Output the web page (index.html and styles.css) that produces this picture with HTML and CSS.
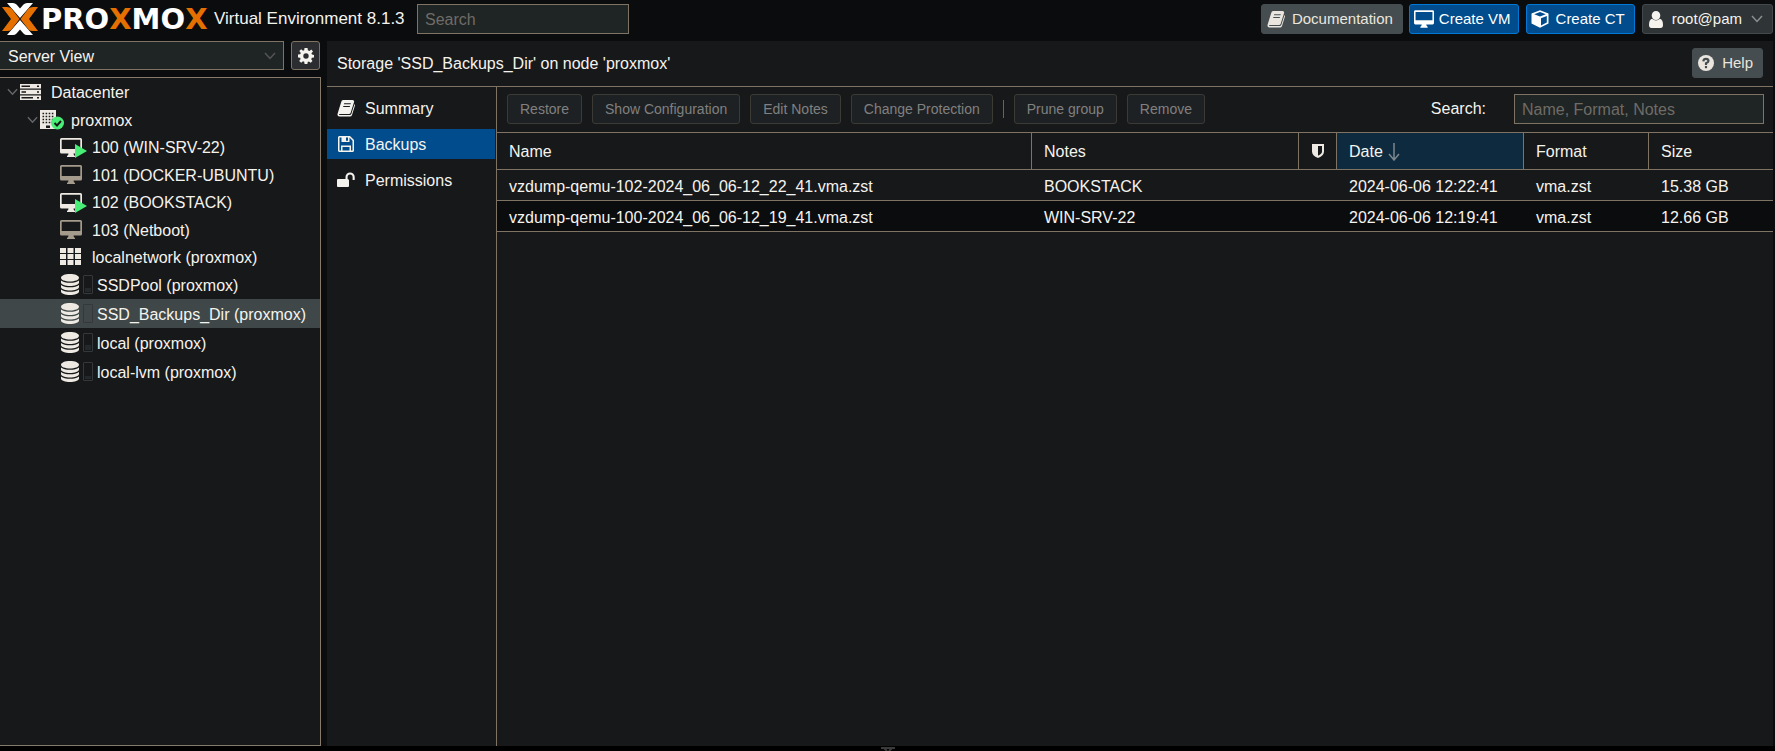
FILE: index.html
```
<!DOCTYPE html>
<html lang="en">
<head>
<meta charset="utf-8">
<title>proxmox - Proxmox Virtual Environment</title>
<link rel="stylesheet" href="styles.css">
</head>
<body>
<svg class="defs" aria-hidden="true">
  <symbol id="book" viewBox="0 0 18 18"><path fill="currentColor" fill-rule="evenodd" d="M6.2 1H15.6Q17.6 1.2 17 3.2L13.6 14Q13.1 15 12 15H3Q1.8 15 2 16H12.6Q14 16 14.4 14.8L17.5 5Q18.2 5.800 17.800 7L15 16Q14.400 17.600 13 17.600H2.400Q.2 17.300.5 15L4.200 3Q4.600 1.200 6.200 1ZM7.200 4.200 6.900 5.300H13.500L13.900 4.200ZM6.400 7 6.100 8.100H12.700L13.100 7Z"/></symbol>
  <symbol id="monitor" viewBox="0 0 22 19"><path fill="currentColor" fill-rule="evenodd" d="M1.500 0H20.500Q22 0 22 1.500V14Q22 15.500 20.500 15.500H13.500Q13.500 17 15 18V19H7V18Q8.500 17 8.500 15.500H1.500Q0 15.500 0 14V1.500Q0 0 1.500 0ZM1.700 1.700V11H20.300V1.700Z"/></symbol>
  <symbol id="cube" viewBox="0 0 18 18"><path fill="currentColor" fill-rule="evenodd" d="M9 .3 17.500 3.500V13.500L9 17.800.5 13.500V3.500ZM9 2 3.200 4.300 9 6.500 14.800 4.300ZM10 8.200V15.400L15.800 12.500V6Z"/></symbol>
  <symbol id="user" viewBox="0 0 14 17"><path fill="currentColor" d="M7 0A4.200 4.400 0 0 1 7 9 4.200 4.400 0 0 1 7 0ZM3 7.800Q7 11.200 11 7.800 14 8.500 14 14 14 17 11.500 17H2.500Q0 17 0 14 0 8.500 3 7.800Z"/></symbol>
  <symbol id="chevron" viewBox="0 0 12 8"><path fill="none" stroke="currentColor" stroke-width="1.500" d="M1 1 6 6.500 11 1"/></symbol>
  <symbol id="gear" viewBox="0 0 16 16"><path fill="currentColor" fill-rule="evenodd" d="M6.500 0H9.500L9.900 2.200 11.400 2.900 13.300 1.600 15 3.500 13.400 5.300 14 6.600 16 7V9.500L13.900 9.800 13.200 11.200 14.500 13 12.700 14.800 10.900 13.400 9.700 13.900 9.400 16H6.600L6.200 13.800 5 13.300 3.200 14.700 1.200 12.900 2.600 11.100 2.100 9.800 0 9.400V6.600L2.200 6.200 2.800 4.900 1.300 3.100 3.200 1.300 5 2.700 6.200 2.200ZM8 5.300A2.700 2.700 0 0 0 8 10.700 2.700 2.700 0 0 0 8 5.300Z"/></symbol>
  <symbol id="server" viewBox="0 0 21 16"><path fill="currentColor" fill-rule="evenodd" d="M0 0H21V4.500H0ZM1.500 1.500V3H10V1.500ZM17 1.500V3H19V1.500ZM0 5.700H21V10.200H0ZM1.500 7.200V8.700H6V7.200ZM17 7.200V8.700H19V7.200ZM0 11.500H21V16H0ZM1.500 13V14.500H13V13ZM17 13V14.500H19V13Z"/></symbol>
  <symbol id="building" viewBox="0 0 24 20"><path fill="#eeeae3" d="M0 0H16V19H0Z"/><path stroke="#17181a" stroke-width="1.600" stroke-dasharray="1.600 1.500" d="M2.500 3.500H14M2.500 6.500H14M2.500 9.500H14M2.500 12.500H14"/><path fill="#17181a" d="M6 15.500H10V18H6Z"/><circle cx="17.500" cy="13" r="6.500" fill="#48ee76"/><path d="M14.500 13 17 15.500 21 11" fill="none" stroke="#17181a" stroke-width="2"/></symbol>
  <symbol id="grid" viewBox="0 0 21 17"><path fill="currentColor" d="M0 0H6V5H0ZM7.500 0H13.500V5H7.500ZM15 0H21V5H15ZM0 6H6V11H0ZM7.500 6H13.500V11H7.500ZM15 6H21V11H15ZM0 12H6V17H0ZM7.500 12H13.500V17H7.500ZM15 12H21V17H15Z"/></symbol>
  <symbol id="database" viewBox="0 0 18 21"><path fill="currentColor" d="M9 0C14 0 18 1.600 18 3.800S14 7.500 9 7.500 0 6 0 3.800 4 0 9 0ZM0 6.400Q3 8.700 9 8.700T18 6.400V8.500C18 13.100 0 13.100 0 8.500ZM0 10.900Q3 13.200 9 13.200T18 10.900V13C18 17.600 0 17.600 0 13ZM0 15.400Q3 17.700 9 17.700T18 15.400V17.500C18 22.100 0 22.100 0 17.500Z"/></symbol>
  <symbol id="floppy" viewBox="0 0 16 16"><path fill="currentColor" fill-rule="evenodd" d="M1 0H12L16 4V15L15 16H1L0 15V1ZM1.500 1.500V14.500H3V9.500H13V14.500H14.500V4.700L11.500 1.500V6H3.500V1.500ZM8 1.500V4.700H10V1.500ZM4.500 11V14.500H11.500V11Z"/></symbol>
  <symbol id="unlock" viewBox="0 0 18 15"><path fill="currentColor" d="M1 6.500H8.500V4.500A4.600 4.500 0 0 1 17.700 4.500V7.500H15.600V4.500A2.500 2.500 0 0 0 10.600 4.500V6.500Q12 6.500 12 8V13.500Q12 14.500 11 14.500H1Q0 14.500 0 13.500V7.500Q0 6.500 1 6.500Z"/></symbol>
  <symbol id="shield" viewBox="0 0 12 14"><path fill="currentColor" fill-rule="evenodd" d="M0 0H12V7.500Q12 11.500 6 14 0 11.500 0 7.500ZM6 2V11.800Q10 9.800 10 7.500V2Z"/></symbol>
  <symbol id="help" viewBox="0 0 16 16"><circle cx="8" cy="8" r="8" fill="currentColor"/><path fill="none" stroke="#454d50" stroke-width="2.200" d="M5.300 6.300Q5.600 3.900 8 3.900T10.500 6.100Q10.500 7.300 8 8.300V10"/><path fill="#454d50" d="M6.900 11H9.100V13.200H6.900Z"/></symbol>
</svg>

<header class="topbar">
  <div class="brand">
    <svg class="mark" viewBox="0 0 36 32" aria-hidden="true">
      <path fill="#fff" d="M5 0H11Q13 0 14.500 1.500L18 5.500 21.500 1.500Q23 0 25 0H31L18 15ZM5 32H11Q13 32 14.500 30.500L18 26.500 21.500 30.500Q23 32 25 32H31L18 17Z"/>
      <path fill="#e57000" d="M0 4H5Q8 4 9.500 5.500L17.500 16 9.500 26.500Q8 28 5 28H0L9 16ZM36 4H31Q28 4 26.500 5.500L18.500 16 26.500 26.500Q28 28 31 28H36L27 16Z"/>
    </svg>
    <span class="wordmark">PRO<b>X</b>MO<b>X</b></span>
    <span class="version">Virtual Environment 8.1.3</span>
  </div>
  <input class="field global-search" type="text" placeholder="Search" aria-label="Search">
  <div class="actions">
    <button class="btn btn-grey"><svg class="i18"><use href="#book"/></svg>Documentation</button>
    <button class="btn btn-blue btn-vm"><svg class="i-mon"><use href="#monitor"/></svg>Create VM</button>
    <button class="btn btn-blue btn-ct"><svg class="i18"><use href="#cube"/></svg>Create CT</button>
    <button class="btn btn-user"><svg class="i-user"><use href="#user"/></svg>root@pam<svg class="i-chev"><use href="#chevron"/></svg></button>
  </div>
</header>

<div class="workspace">
  <aside class="sidebar">
    <div class="view-row">
      <div class="view-select">
        <select aria-label="View"><option>Server View</option></select>
        <svg class="i-chev"><use href="#chevron"/></svg>
      </div>
      <button class="gear" aria-label="Settings"><svg class="i16"><use href="#gear"/></svg></button>
    </div>
    <ul class="tree">
      <li class="l0"><svg class="i-exp"><use href="#chevron"/></svg><svg class="i-server"><use href="#server"/></svg><span class="name">Datacenter</span></li>
      <li class="l1"><svg class="i-exp"><use href="#chevron"/></svg><svg class="i-node"><use href="#building"/></svg><span class="name">proxmox</span></li>
      <li class="l2"><span class="vm run"><svg class="i-vm"><use href="#monitor"/></svg></span><span class="name">100 (WIN-SRV-22)</span></li>
      <li class="l2"><span class="vm off"><svg class="i-vm"><use href="#monitor"/></svg></span><span class="name">101 (DOCKER-UBUNTU)</span></li>
      <li class="l2"><span class="vm run"><svg class="i-vm"><use href="#monitor"/></svg></span><span class="name">102 (BOOKSTACK)</span></li>
      <li class="l2"><span class="vm off"><svg class="i-vm"><use href="#monitor"/></svg></span><span class="name">103 (Netboot)</span></li>
      <li class="l2 net"><span class="vm"><svg class="i-grid"><use href="#grid"/></svg></span><span class="name">localnetwork (proxmox)</span></li>
      <li class="l2 store"><svg class="i-db"><use href="#database"/></svg><span class="usage"><i style="height:4px"></i></span><span class="name">SSDPool (proxmox)</span></li>
      <li class="l2 store selected"><svg class="i-db"><use href="#database"/></svg><span class="usage"></span><span class="name">SSD_Backups_Dir (proxmox)</span></li>
      <li class="l2 store"><svg class="i-db"><use href="#database"/></svg><span class="usage"><i style="height:5px"></i></span><span class="name">local (proxmox)</span></li>
      <li class="l2 store"><svg class="i-db"><use href="#database"/></svg><span class="usage"><i style="height:3px"></i></span><span class="name">local-lvm (proxmox)</span></li>
    </ul>
  </aside>

  <main class="panel">
    <div class="panel-title">
      <span class="name">Storage 'SSD_Backups_Dir' on node 'proxmox'</span>
      <button class="btn btn-grey btn-help"><svg class="i16"><use href="#help"/></svg>Help</button>
    </div>
    <div class="panel-body">
      <nav class="tabs">
        <a href="#summary"><svg class="i18"><use href="#book"/></svg><span class="name">Summary</span></a>
        <a href="#backups" class="active"><svg class="i-tab"><use href="#floppy"/></svg><span class="name">Backups</span></a>
        <a href="#permissions"><svg class="i-tab"><use href="#unlock"/></svg><span class="name">Permissions</span></a>
      </nav>
      <section class="content">
        <div class="toolbar">
          <button class="tool" disabled>Restore</button>
          <button class="tool" disabled>Show Configuration</button>
          <button class="tool" disabled>Edit Notes</button>
          <button class="tool" disabled>Change Protection</button>
          <span class="sep"></span>
          <button class="tool" disabled>Prune group</button>
          <button class="tool" disabled>Remove</button>
          <label for="filter">Search:</label>
          <input class="field filter" id="filter" type="text" placeholder="Name, Format, Notes">
        </div>
        <table>
          <colgroup><col><col class="c-notes"><col class="c-shield"><col class="c-date"><col class="c-format"><col class="c-size"></colgroup>
          <thead>
            <tr><th>Name</th><th>Notes</th><th class="shield"><svg class="i-shield" role="img" aria-label="Protected"><use href="#shield"/></svg></th>
            <th class="sorted">Date<svg class="i-sort" viewBox="0 0 12 18"><path fill="none" stroke="currentColor" stroke-width="1.500" d="M6 0V17M1 11 6 17 11 11"/></svg></th><th>Format</th><th>Size</th></tr>
          </thead>
          <tbody>
            <tr><td>vzdump-qemu-102-2024_06_06-12_22_41.vma.zst</td><td>BOOKSTACK</td><td></td><td>2024-06-06 12:22:41</td><td>vma.zst</td><td>15.38 GB</td></tr>
            <tr><td>vzdump-qemu-100-2024_06_06-12_19_41.vma.zst</td><td>WIN-SRV-22</td><td></td><td>2024-06-06 12:19:41</td><td>vma.zst</td><td>12.66 GB</td></tr>
          </tbody>
        </table>
      </section>
    </div>
  </main>
</div>
<footer class="splitter"><svg class="i-split" viewBox="0 0 14 4"><path fill="none" stroke="#3a3a3a" stroke-width="2" d="M0 1H14M3 1 6 4M11 1 8 4"/></svg></footer>
</body>
</html>
```
FILE: styles.css
```
* { box-sizing: border-box; }
body {
  margin: 0;
  height: 100vh;
  display: flex;
  flex-direction: column;
  overflow: hidden;
  background: #0b0c0e;
  color: #f5f3ee;
  font: 16px/20px "Liberation Sans", Arial, sans-serif;
}
button, input, select { font: inherit; color: inherit; margin: 0; }
svg { flex: none; display: block; }
.defs { position: absolute; width: 0; height: 0; }

.i16 { width: 16px; height: 16px; }
.i18 { width: 18px; height: 18px; }
.i-mon { width: 20px; height: 18px; }
.i-user { width: 14px; height: 17px; }
.i-chev { width: 12px; height: 8px; color: #8c8f90; }
.name { padding-top: 2px; }

.topbar { display: flex; align-items: center; height: 41px; padding: 0 2px 3px; }
.brand { display: flex; align-items: center; white-space: nowrap; width: 415px; }
.mark { width: 36px; height: 32px; margin-right: 3px; }
.wordmark { font: bold 29px/32px "DejaVu Sans", sans-serif; color: #fff; width: 173px; }
.wordmark b { color: #e57000; }
.version { font-size: 17px; }
.field {
  height: 30px;
  padding: 2px 7px 0;
  border: 1px solid #7f7363;
  border-radius: 0;
  background: #1f2424;
  outline: 0;
}
.field::placeholder { color: #6f6c67; opacity: 1; }
.global-search { width: 212px; }
.actions { display: flex; margin-left: auto; }
.btn {
  display: flex;
  align-items: center;
  height: 30px;
  padding: 0 9px 0 5px;
  border: 1px solid #4d5558;
  border-radius: 3px;
  gap: 7px;
  font-size: 15px;
  white-space: nowrap;
}
.btn-grey { background: #454d50; border-color: #454d50; color: #eae6df; margin-right: 6px; }
.btn-blue { background: #004c8c; border-color: #0078d6; color: #fff; margin-right: 7px; }
.btn-vm { padding: 0 7px 0 4px; gap: 5px; }
.btn-ct { padding-left: 4px; gap: 7px; }
.btn-user { background: #2f3436; border-color: #43494b; padding-left: 6px; gap: 9px; }

.workspace { flex: 1; display: flex; min-height: 0; }
.sidebar { width: 321px; margin-right: 6px; display: flex; flex-direction: column; }
.view-row { display: flex; justify-content: space-between; padding-right: 1px; margin-bottom: 7px; }
.view-select { display: grid; width: 284px; align-items: center; }
.view-select select, .view-select svg { grid-area: 1 / 1; }
.view-select svg { justify-self: end; margin-right: 8px; color: #555; pointer-events: none; }
.view-select select {
  appearance: none;
  height: 29px;
  padding: 2px 8px 0;
  border: 1px solid #7f7363;
  border-left: 0;
  border-radius: 0;
  background: #1f2424;
}
.gear {
  display: grid;
  place-items: center;
  width: 29px;
  height: 29px;
  padding: 0;
  border: 1px solid #7f7363;
  border-radius: 3px;
  background: #2b2d30;
}
.tree {
  flex: 1;
  margin: 0;
  padding: 0;
  list-style: none;
  background: #17181a;
  border: 1px solid #857a6b;
  border-left: 0;
}
.tree li { display: flex; align-items: center; height: 28px; white-space: nowrap; }
.tree li:nth-child(even), .tree .net { height: 27px; }
.tree .store, .tree .store:nth-child(even) { height: 29px; }
.l0 { padding-left: 7px; }
.l1 { padding-left: 27px; }
.l2 { padding-left: 60px; }
.selected { background: #3f4748; }
.i-exp { width: 11px; height: 8px; margin-right: 2px; color: #65686a; }
.i-server { width: 21px; height: 16px; margin-right: 10px; color: #eeeae3; }
.i-node { width: 24px; height: 20px; margin-right: 7px; }
.vm { position: relative; width: 32px; color: #eeeae3; }
.vm.off { color: #a59b8c; }
.vm.run::after {
  content: "";
  position: absolute;
  left: 15px;
  top: 6px;
  border-left: 12px solid #48ee76;
  border-top: 7px solid transparent;
  border-bottom: 7px solid transparent;
}
.i-vm { width: 22px; height: 19px; }
.i-grid { width: 21px; height: 17px; }
.i-db { width: 18px; height: 21px; margin: 0 4px 0 1px; color: #eeeae3; }
.usage {
  display: flex;
  align-items: flex-end;
  width: 10px;
  height: 19px;
  margin-right: 4px;
  padding: 1px;
  border: 1px solid #34383a;
  border-radius: 1px;
}
.usage i { width: 100%; background: #24282a; }

.panel { flex: 1; display: flex; flex-direction: column; margin-right: 2px; min-width: 0; background: #17181a; }
.panel-title {
  display: flex;
  align-items: center;
  justify-content: space-between;
  height: 46px;
  padding: 0 10px 1px;
  border-bottom: 1px solid #7f7363;
}
.btn-help { margin-right: 0; gap: 8px; }
.panel-body { flex: 1; display: flex; }
.tabs {
  width: 170px;
  display: flex;
  flex-direction: column;
  gap: 6px;
  padding: 6px 1px 0 0;
  border-right: 1px solid #7f7363;
}
.tabs a {
  display: flex;
  align-items: center;
  gap: 10px;
  height: 30px;
  padding-left: 10px;
  color: inherit;
  text-decoration: none;
}
.tabs .active { background: #004c8c; }
.i-tab { width: 18px; height: 16px; }
.content { flex: 1; min-width: 0; }
.toolbar {
  display: flex;
  align-items: center;
  gap: 10px;
  height: 45px;
  padding: 0 9px 1px 10px;
}
.tool {
  height: 30px;
  padding: 0 12px;
  border: 1px solid #3b3a35;
  border-radius: 3px;
  background: #1e2123;
  color: #808080;
  font-size: 14px;
  white-space: nowrap;
}
.sep { width: 1px; height: 18px; background: #6b6257; }
.toolbar label { margin-left: auto; margin-right: 18px; }
.filter { width: 250px; }

table { width: 100%; table-layout: fixed; border-collapse: separate; border-spacing: 0; }
.c-notes { width: 267px; }
.c-shield { width: 38px; }
.c-date { width: 187px; }
.c-format { width: 125px; }
.c-size { width: 124px; }
th, td { padding: 0 12px; text-align: left; font-weight: normal; white-space: nowrap; border-bottom: 1px solid #7f7363; }
th { height: 38px; padding-top: 1px; border-top: 1px solid #7f7363; border-right: 1px solid #7f7363; }
th:last-child { border-right: 0; }
td { height: 31px; padding-top: 4px; }
tbody tr:nth-child(even) { background: #0b0c0e; }
.sorted { background: #0d2a3e; }
.shield { padding: 0; }
.i-shield { width: 12px; height: 14px; margin: 0 auto; color: #eeeae3; }
.i-sort { display: inline-block; width: 12px; height: 18px; margin-left: 5px; vertical-align: middle; color: #7c868c; }

.splitter { height: 5px; background: #000; display: flex; justify-content: center; align-items: flex-end; }
.i-split { width: 14px; height: 4px; }
```
